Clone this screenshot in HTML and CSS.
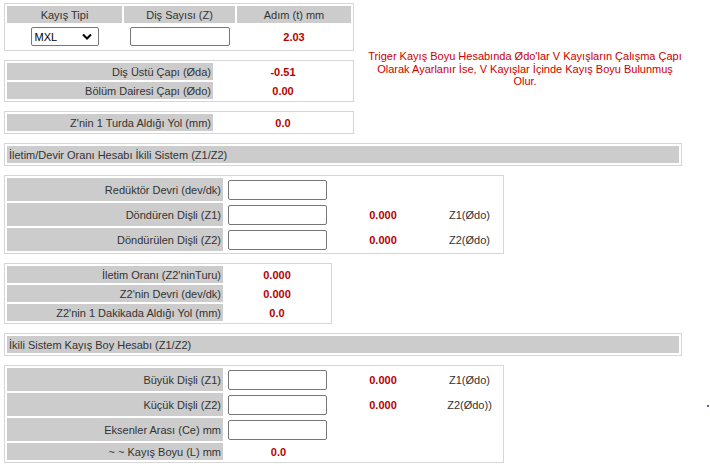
FILE: index.html
```html
<!DOCTYPE html>
<html lang="tr">
<head>
	<meta charset="UTF-8">
	<title>Kayış Boyu Hesabı</title>
	<link rel="stylesheet" href="styles.css">
</head>
<body>
	<div class="page">
		<!-- ust kisim -->
		<div class="top">
			<div class="left">
				<table class="box t1">
					<tr class="head">
						<th class="c1">Kayış Tipi</th>
						<th class="c2">Diş Sayısı (Z)</th>
						<th class="c3">Adım (t) mm</th>
					</tr>
					<tr class="inrow">
						<td><select class="sel"><option>MXL</option></select></td>
						<td><input type="text" class="inp wide"></td>
						<td class="val">2.03</td>
					</tr>
				</table>

				<table class="box t2">
					<tr>
						<td class="lbl">Diş Üstü Çapı (Øda)</td>
						<td class="val">-0.51</td>
					</tr>
					<tr>
						<td class="lbl">Bölüm Dairesi Çapı (Ødo)</td>
						<td class="val">0.00</td>
					</tr>
				</table>

				<table class="box t2">
					<tr>
						<td class="lbl">Z'nin 1 Turda Aldığı Yol (mm)</td>
						<td class="val">0.0</td>
					</tr>
				</table>
			</div>
			<div class="note">
				Triger Kayış Boyu Hesabında Ødo'lar V Kayışların Çalışma Çapı<br>
				Olarak Ayarlanır İse, V Kayışlar İçinde Kayış Boyu Bulunmuş<br>
				Olur.
			</div>
		</div>

		<!-- iletim orani -->
		<table class="box title">
			<tr><td>İletim/Devir Oranı Hesabı İkili Sistem (Z1/Z2)</td></tr>
		</table>

		<table class="box t4">
			<tr class="inrow">
				<td class="lbl">Redüktör Devri (dev/dk)</td>
				<td class="icell"><input type="text" class="inp"></td>
				<td class="val"></td>
				<td class="z"></td>
			</tr>
			<tr class="inrow">
				<td class="lbl">Döndüren Dişli (Z1)</td>
				<td class="icell"><input type="text" class="inp"></td>
				<td class="val">0.000</td>
				<td class="z">Z1(Ødo)</td>
			</tr>
			<tr class="inrow">
				<td class="lbl">Döndürülen Dişli (Z2)</td>
				<td class="icell"><input type="text" class="inp"></td>
				<td class="val">0.000</td>
				<td class="z">Z2(Ødo)</td>
			</tr>
		</table>

		<table class="box t5">
			<tr>
				<td class="lbl">İletim Oranı (Z2'ninTuru)</td>
				<td class="val">0.000</td>
			</tr>
			<tr>
				<td class="lbl">Z2'nin Devri (dev/dk)</td>
				<td class="val">0.000</td>
			</tr>
			<tr>
				<td class="lbl">Z2'nin 1 Dakikada Aldığı Yol (mm)</td>
				<td class="val">0.0</td>
			</tr>
		</table>

		<!-- kayis boyu -->
		<table class="box title">
			<tr><td>İkili Sistem Kayış Boy Hesabı (Z1/Z2)</td></tr>
		</table>

		<table class="box t4">
			<tr class="inrow">
				<td class="lbl">Büyük Dişli (Z1)</td>
				<td class="icell"><input type="text" class="inp"></td>
				<td class="val">0.000</td>
				<td class="z">Z1(Ødo)</td>
			</tr>
			<tr class="inrow">
				<td class="lbl">Küçük Dişli (Z2)</td>
				<td class="icell"><input type="text" class="inp"></td>
				<td class="val">0.000</td>
				<td class="z">Z2(Ødo))</td>
			</tr>
			<tr class="inrow">
				<td class="lbl">Eksenler Arası (Ce) mm</td>
				<td class="icell"><input type="text" class="inp"></td>
				<td class="val"></td>
				<td class="z"></td>
			</tr>
			<tr>
				<td class="lbl">~ ~ Kayış Boyu (L) mm</td>
				<td class="val">0.0</td>
				<td></td>
				<td></td>
			</tr>
		</table>

		<span class="dot"></span>
	</div>
</body>
</html>
```

FILE: styles.css
```css
* {
	margin: 0;
	padding: 0;
	box-sizing: border-box;
}
body {
	font-family: "Liberation Sans", Arial, sans-serif;
	font-size: 11px;
	color: #333;
	background: #fff;
}
.page {
	position: relative;
	padding: 3px 4px;
}
.top {
	display: flex;
	align-items: flex-start;
}
.left {
	width: 350px;
}
.note {
	width: 330px;
	margin-left: 6px;
	padding-top: 47px;
	text-align: center;
	color: #c00;
	line-height: 12.5px;
}

/* tablolar */
.box {
	border: 1px solid #d6d6d6;
	border-collapse: separate;
	border-spacing: 2px;
	table-layout: fixed;
	margin-bottom: 9px;
}
.box td, .box th {
	height: 17px;
	padding: 0 2px;
	font-weight: normal;
	white-space: nowrap;
}
.head th {
	background-color: #ccc;
	text-align: center;
}
.t1 {
	width: 350px;
}
.t1 .c1 { width: 115px; }
.t1 .c2 { width: 111px; }
.t1 .c3 { width: 114px; }
.t1 td {
	height: 22px;
	text-align: center;
}
.lbl {
	background-color: #ccc;
	text-align: right;
}
.box .val {
	text-align: center;
	color: #b80000;
	font-weight: bold;
}
.t2 {
	width: 350px;
}
.t2 .lbl {
	width: 206px;
}
.title {
	width: 678px;
}
.title td {
	background-color: #ccc;
	text-align: left;
}
.t4 {
	width: 500px;
}
.t4 .lbl {
	width: 216px;
}
.t4 .icell {
	width: 107px;
}
.t4 .val {
	width: 98px;
}
.t4 .z {
	text-align: center;
	padding-left: 6px;
}
.inrow td {
	height: 23px;
}
.t5 {
	width: 328px;
}
.t5 .lbl {
	width: 216px;
}

/* form elemanlari */
.inp {
	display: block;
	width: 99px;
	height: 20px;
	margin-left: 1px;
	border: 1px solid #767676;
	border-radius: 2px;
	background: #fff;
	font: inherit;
}
.inp.wide {
	width: 100px;
	height: 19px;
	margin: 0 auto;
}
.sel {
	display: block;
	width: 68px;
	height: 19px;
	margin: 0 auto;
	padding-left: 3px;
	border: 1px solid #767676;
	border-radius: 2px;
	background: #fff url("data:image/svg+xml,%3Csvg xmlns='http://www.w3.org/2000/svg' width='10' height='7' viewBox='0 0 10 7'%3E%3Cpath d='M1 1.5l4 4 4-4' fill='none' stroke='%23000' stroke-width='2'/%3E%3C/svg%3E") no-repeat right 6px center;
	-webkit-appearance: none;
	appearance: none;
	font: inherit;
	color: #000;
}
.dot {
	position: absolute;
	left: 707px;
	top: 405px;
	width: 2px;
	height: 2px;
	background: #5a5ad0;
}
```
